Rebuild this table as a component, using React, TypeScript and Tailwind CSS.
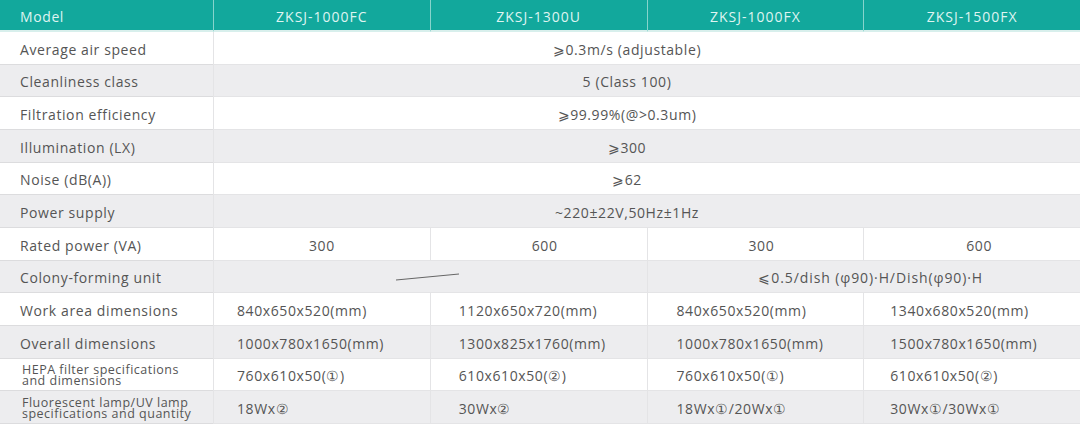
import React from "react"

type Row = {
  label: string
  small?: boolean
  span?: string
  cells?: string[]
  left?: boolean
  colony?: boolean
}

const models = ["ZKSJ-1000FC", "ZKSJ-1300U", "ZKSJ-1000FX", "ZKSJ-1500FX"]

// left padding per data column (left aligned rows) and nudge for centered rows
const leftPad = ["pl-[23px]", "pl-[28px]", "pl-[29px]", "pl-[26px]"]
const centerPad = ["", "pl-[12px]", "pl-[12px]", "pl-[14px]"]

const rows: Row[] = [
  { label: "Average air speed", span: "⩾0.3m/s (adjustable)" },
  { label: "Cleanliness class", span: "5 (Class 100)" },
  { label: "Filtration efficiency", span: "⩾99.99%(@>0.3um)" },
  { label: "Illumination (LX)", span: "⩾300" },
  { label: "Noise (dB(A))", span: "⩾62" },
  { label: "Power supply", span: "~220±22V,50Hz±1Hz" },
  { label: "Rated power (VA)", cells: ["300", "600", "300", "600"] },
  { label: "Colony-forming unit", colony: true },
  {
    label: "Work area dimensions",
    left: true,
    cells: ["840x650x520(mm)", "1120x650x720(mm)", "840x650x520(mm)", "1340x680x520(mm)"],
  },
  {
    label: "Overall dimensions",
    left: true,
    cells: ["1000x780x1650(mm)", "1300x825x1760(mm)", "1000x780x1650(mm)", "1500x780x1650(mm)"],
  },
  {
    label: "HEPA filter specifications\nand dimensions",
    small: true,
    left: true,
    cells: ["760x610x50(①)", "610x610x50(②)", "760x610x50(①)", "610x610x50(②)"],
  },
  {
    label: "Fluorescent lamp/UV lamp\nspecifications and quantity",
    small: true,
    left: true,
    cells: ["18Wx②", "30Wx②", "18Wx①/20Wx①", "30Wx①/30Wx①"],
  },
]

export default function App() {
  return (
    <div
      className="grid h-[424px] w-[1080px] grid-cols-[213px_repeat(4,1fr)] grid-rows-[32px_repeat(12,1fr)] overflow-hidden bg-white text-[14px] text-[#555] tracking-[0.6px]"
      style={{ fontFamily: '"Open Sans", "Noto Sans", sans-serif' }}
    >
      {/* header */}
      <div className="flex items-center border-b-2 border-[#d8efec] bg-[#12a89c] pl-5 pt-[2px] text-[#dff4f1]">Model</div>
      {models.map((m) => (
        <div
          key={m}
          className="flex items-center justify-center border-b-2 border-l border-[#d8efec] border-l-[#86d4cc] bg-[#12a89c] pt-[2px] text-[#dff4f1] tracking-[1px]"
        >
          {m}
        </div>
      ))}

      {rows.map((r, i) => {
        const bg = i % 2 === 1 ? "bg-[#ededef]" : "bg-white"
        const cell = `border-b border-[#dcdcde] ${bg}`
        return (
          <React.Fragment key={r.label}>
            <div
              className={`flex items-center ${cell} ${
                r.small
                  ? "whitespace-pre-line pl-[22px] pt-[1px] text-[12.5px] leading-[11px] tracking-[0.5px]"
                  : "pl-5 pt-[3px]"
              }`}
            >
              {r.label}
            </div>
            {r.span && (
              <div className={`col-span-4 flex items-center justify-center border-l border-[#e4e4e6] pr-[40px] pt-[3px] ${cell}`}>
                {r.span}
              </div>
            )}
            {r.colony && (
              <>
                <div className={`col-span-2 flex items-center justify-center border-l border-[#e4e4e6] ${cell}`}>
                  <svg width="66" height="10" viewBox="0 0 66 10" className="-ml-1 mt-[1px]">
                    <line x1="1" y1="8" x2="64" y2="2" stroke="#666" strokeWidth="1" />
                  </svg>
                </div>
                <div className={`col-span-2 flex items-center justify-center border-l border-[#e4e4e6] pl-[14px] pt-[3px] tracking-[0.9px] ${cell}`}>
                  ⩽0.5/dish (φ90)·H/Dish(φ90)·H
                </div>
              </>
            )}
            {r.cells &&
              r.cells.map((c, j) => (
                <div
                  key={j}
                  className={`flex items-center border-l border-[#e4e4e6] pt-[3px] ${cell} ${
                    r.left ? leftPad[j] : `justify-center ${centerPad[j]}`
                  }`}
                >
                  {c}
                </div>
              ))}
          </React.Fragment>
        )
      })}
    </div>
  )
}
